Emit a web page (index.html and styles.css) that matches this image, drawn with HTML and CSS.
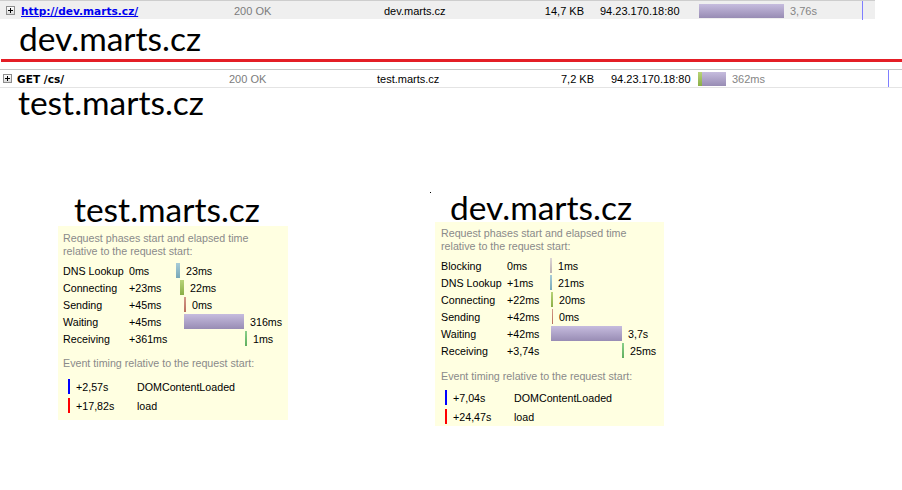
FILE: index.html
```html
<!DOCTYPE html>
<html>
<head>
<meta charset="utf-8">
<link rel="stylesheet" href="styles.css">
</head>
<body>
<div class="netrow r1">
  <div class="c-icon"><svg class="plus" width="9" height="9" viewBox="0 0 9 9"><defs><linearGradient id="pg1" x1="0" y1="0" x2="0" y2="1"><stop offset="0" stop-color="#ffffff"/><stop offset="1" stop-color="#d8d8d8"/></linearGradient></defs><rect x="0.5" y="0.5" width="8" height="8" fill="url(#pg1)" stroke="#8e8e8e"/><path d="M2 4.5H7M4.5 2V7" stroke="#000" stroke-width="1"/></svg></div>
  <div class="c-file"><a class="url" href="#">http://dev.marts.cz/</a></div>
  <div class="c-status">200 OK</div>
  <div class="c-domain">dev.marts.cz</div>
  <div class="c-size">14,7 KB</div>
  <div class="c-ip">94.23.170.18:80</div>
  <div class="c-time"><span class="nbar wait" style="width:85px"></span><span class="ntext">3,76s</span></div>
  <div class="c-line"></div>
  <div></div>
</div>
<div class="big big-dev">dev.marts.cz</div>
<div class="redrule"></div>
<div class="netrow r2">
  <div class="c-icon"><svg class="plus" width="9" height="9" viewBox="0 0 9 9"><defs><linearGradient id="pg2" x1="0" y1="0" x2="0" y2="1"><stop offset="0" stop-color="#ffffff"/><stop offset="1" stop-color="#d8d8d8"/></linearGradient></defs><rect x="0.5" y="0.5" width="8" height="8" fill="url(#pg2)" stroke="#8e8e8e"/><path d="M2 4.5H7M4.5 2V7" stroke="#000" stroke-width="1"/></svg></div>
  <div class="c-file"><span class="get">GET /cs/</span></div>
  <div class="c-status">200 OK</div>
  <div class="c-domain">test.marts.cz</div>
  <div class="c-size">7,2 KB</div>
  <div class="c-ip">94.23.170.18:80</div>
  <div class="c-time"><span class="nbar conn" style="width:4px"></span><span class="nbar wait" style="width:24px"></span><span class="ntext">362ms</span></div>
  <div class="c-line"></div>
  <div></div>
</div>
<div class="big big-test">test.marts.cz</div>

<div class="panels">
  <div class="panel panel-l">
    <div class="ptitle">test.marts.cz</div>
    <div class="tip tip-l">
      <div class="tip-head">Request phases start and elapsed time<br>relative to the request start:</div>
      <div class="phases">
        <div class="phase"><span>DNS Lookup</span><span>0ms</span><span class="tl"><span class="bar dns" style="margin-left:0px;width:4px"></span><span class="el">23ms</span></span></div>
        <div class="phase"><span>Connecting</span><span>+23ms</span><span class="tl"><span class="bar conn" style="margin-left:4px;width:4px"></span><span class="el">22ms</span></span></div>
        <div class="phase"><span>Sending</span><span>+45ms</span><span class="tl"><span class="bar send" style="margin-left:8px;width:2px"></span><span class="el">0ms</span></span></div>
        <div class="phase"><span>Waiting</span><span>+45ms</span><span class="tl"><span class="bar wait" style="margin-left:8px;width:60px"></span><span class="el">316ms</span></span></div>
        <div class="phase"><span>Receiving</span><span>+361ms</span><span class="tl"><span class="bar recv" style="margin-left:69px;width:2px"></span><span class="el">1ms</span></span></div>
      </div>
      <div class="tip-head ev-head">Event timing relative to the request start:</div>
      <div class="events">
        <div class="event"><span class="mark blue"></span><span class="ev-time">+2,57s</span><span>DOMContentLoaded</span></div>
        <div class="event"><span class="mark red"></span><span class="ev-time">+17,82s</span><span>load</span></div>
      </div>
    </div>
  </div>
  <div class="panel panel-r">
    <div class="dot"></div>
    <div class="ptitle">dev.marts.cz</div>
    <div class="tip tip-r">
      <div class="tip-head">Request phases start and elapsed time<br>relative to the request start:</div>
      <div class="phases">
        <div class="phase"><span>Blocking</span><span>0ms</span><span class="tl"><span class="bar block" style="margin-left:0px;width:2px"></span><span class="el">1ms</span></span></div>
        <div class="phase"><span>DNS Lookup</span><span>+1ms</span><span class="tl"><span class="bar dns" style="margin-left:0px;width:2px"></span><span class="el">21ms</span></span></div>
        <div class="phase"><span>Connecting</span><span>+22ms</span><span class="tl"><span class="bar conn" style="margin-left:1px;width:2px"></span><span class="el">20ms</span></span></div>
        <div class="phase"><span>Sending</span><span>+42ms</span><span class="tl"><span class="bar send" style="margin-left:2px;width:1px"></span><span class="el">0ms</span></span></div>
        <div class="phase"><span>Waiting</span><span>+42ms</span><span class="tl"><span class="bar wait" style="margin-left:1px;width:71px"></span><span class="el">3,7s</span></span></div>
        <div class="phase"><span>Receiving</span><span>+3,74s</span><span class="tl"><span class="bar recv" style="margin-left:72px;width:2px"></span><span class="el">25ms</span></span></div>
      </div>
      <div class="tip-head ev-head">Event timing relative to the request start:</div>
      <div class="events">
        <div class="event"><span class="mark blue"></span><span class="ev-time">+7,04s</span><span>DOMContentLoaded</span></div>
        <div class="event"><span class="mark red"></span><span class="ev-time">+24,47s</span><span>load</span></div>
      </div>
    </div>
  </div>
</div>
</body>
</html>
```
FILE: styles.css
```css
html, body {
  margin: 0;
  padding: 0;
  background: #ffffff;
}
body {
  font-family: "Liberation Sans", Arial, sans-serif;
  font-size: 11px;
  color: #000;
  width: 902px;
  height: 490px;
  overflow: hidden;
}

/* network rows */
.netrow {
  display: grid;
  align-items: center;
  white-space: nowrap;
}
.r1 {
  width: 875px;
  height: 18px;
  border-top: 1px solid #cdcdcd;
  background: #efefef;
  grid-template-columns: 21px 213px 150px 158px 42px 115px 163px 1px 12px;
}
.r2 {
  width: 902px;
  height: 17px;
  margin-top: 7px;
  border-top: 1px solid #c6c6c6;
  border-bottom: 1px solid #e4e4e4;
  grid-template-columns: 17px 212px 148px 173px 44px 104px 190px 1px 13px;
}
.c-icon {
  display: flex;
  align-items: center;
  height: 100%;
}
.r1 .c-icon { padding-left: 6px; }
.r2 .c-icon { padding-left: 3px; }
.plus { display: block; }
.url {
  font-family: "DejaVu Sans", Verdana, sans-serif;
  font-weight: bold;
  font-size: 10.6px;
  color: #0000f0;
  text-decoration: underline;
}
.get {
  font-family: "DejaVu Sans", Verdana, sans-serif;
  font-weight: bold;
  font-size: 10.6px;
  color: #000;
}
.c-status { color: #7c7c7c; }
.c-size { text-align: right; }
.r1 .c-ip { padding-left: 16px; }
.r2 .c-ip { padding-left: 17px; }
.c-time {
  display: flex;
  align-items: center;
}
.nbar {
  display: block;
  height: 14px;
}
.ntext {
  color: #858585;
  margin-left: 6px;
}
.c-line {
  height: 100%;
  background: #7f7fff;
}
.r1 .c-line { height: 19px; }

/* big labels */
.big {
  font-family: Lato, "Open Sans", sans-serif;
  font-size: 33.5px;
  line-height: 28px;
  color: #000;
  white-space: nowrap;
}
.big-dev {
  margin-top: 5px;
  padding-left: 19px;
}
.big-test {
  margin-top: 0;
  padding-left: 18px;
}
.redrule {
  margin-top: 7px;
  height: 3px;
  margin-left: 1px;
  background: #e41e26;
}

/* tooltip panels */
.panels {
  display: flex;
  align-items: flex-start;
}
.panel-l {
  margin-left: 58px;
  margin-top: 79px;
}
.panel-r {
  margin-left: 142px;
  margin-top: 76px;
}
.dot {
  width: 1px;
  height: 1px;
  background: #000;
}
.ptitle {
  font-family: Lato, "Open Sans", sans-serif;
  font-size: 33.5px;
  line-height: 28px;
  white-space: nowrap;
}
.panel-l .ptitle { padding-left: 16px; }
.panel-r .ptitle { padding-left: 20px; }

.tip {
  background: #ffffe1;
  white-space: nowrap;
  font-size: 10.7px;
}
.tip-l {
  width: 225px;
  margin-top: 3px;
  padding: 6px 0 5px 5px;
}
.tip-r {
  width: 223px;
  margin-top: 1px;
  margin-left: 5px;
  padding: 5px 0 0 6px;
}
.tip-head {
  color: #8a8a8a;
  line-height: 13px;
}
.phases { margin-top: 4px; }
.phase {
  display: grid;
  height: 17px;
  align-items: center;
}
.tip-l .phase { grid-template-columns: 66px 47px 1fr; }
.tip-r .phase { grid-template-columns: 66px 43px 1fr; }
.tl {
  display: flex;
  align-items: center;
}
.bar {
  display: block;
  height: 15px;
  flex: none;
}
.el { margin-left: 6px; }

.block { background: linear-gradient(#ddd6d6, #bcb2b2); }
.dns { background: linear-gradient(#a8ccd8, #78a8b8); }
.conn { background: linear-gradient(#b8d478, #8aae46); }
.send { background: linear-gradient(#d49a8a, #b86e5c); }
.wait { background: linear-gradient(#c6bcde, #988cb4); }
.recv { background: linear-gradient(#8ad08a, #5eae5e); }

.tip-l .ev-head { margin-top: 10px; }
.tip-r .ev-head { margin-top: 11px; }
.tip-l .events { margin-top: 7px; }
.tip-r .events { margin-top: 5px; }
.event {
  display: flex;
  align-items: center;
  height: 19px;
  padding-left: 5px;
}
.tip-r .event { padding-left: 4px; }
.mark {
  display: block;
  width: 2px;
  height: 15px;
  margin-right: 6px;
}
.mark.blue { background: #0000ff; }
.mark.red { background: #ff0000; }
.ev-time { width: 61px; }
```
